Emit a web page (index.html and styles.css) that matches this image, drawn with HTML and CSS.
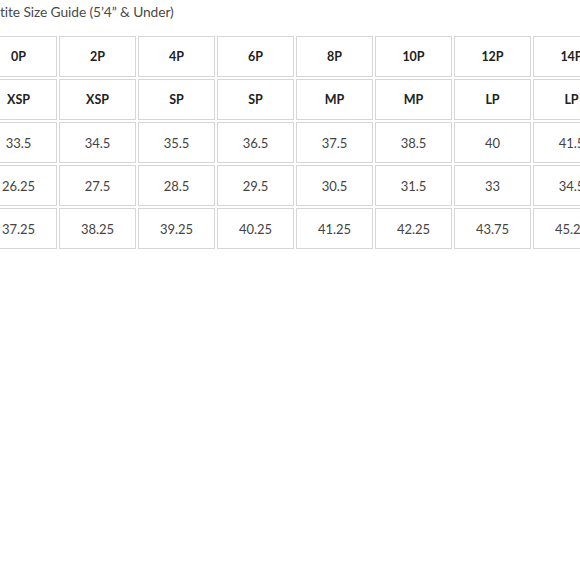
FILE: index.html
```html
<!DOCTYPE html>
<html>
<head>
<meta charset="utf-8">
<link rel="stylesheet" href="styles.css">
</head>
<body>
<div class="guide">
  <h2 class="title">Petite Size Guide (5’4” &amp; Under)</h2>
  <table class="sizes">
    <tr class="head">
      <td>0P</td><td>2P</td><td>4P</td><td>6P</td><td>8P</td><td>10P</td><td>12P</td><td>14P</td>
    </tr>
    <tr class="head">
      <td>XSP</td><td>XSP</td><td>SP</td><td>SP</td><td>MP</td><td>MP</td><td>LP</td><td>LP</td>
    </tr>
    <tr>
      <td>33.5</td><td>34.5</td><td>35.5</td><td>36.5</td><td>37.5</td><td>38.5</td><td>40</td><td>41.5</td>
    </tr>
    <tr>
      <td>26.25</td><td>27.5</td><td>28.5</td><td>29.5</td><td>30.5</td><td>31.5</td><td>33</td><td>34.5</td>
    </tr>
    <tr>
      <td>37.25</td><td>38.25</td><td>39.25</td><td>40.25</td><td>41.25</td><td>42.25</td><td>43.75</td><td>45.25</td>
    </tr>
  </table>
</div>
</body>
</html>
```
FILE: styles.css
```css
html, body {
  margin: 0;
  padding: 0;
  background: #fff;
  overflow: hidden;
}
.guide {
  margin-left: -22px;
  width: 700px;
  font-family: Lato, "Open Sans", sans-serif;
}
.title {
  margin: 0;
  padding: 3px 0 0 7px;
  height: 34px;
  box-sizing: border-box;
  font-size: 13.8px;
  font-weight: normal;
  color: #4a4a4a;
  line-height: 18px;
  letter-spacing: -0.1px;
}
.sizes {
  border-collapse: separate;
  border-spacing: 2px;
}
.sizes td {
  width: 75px;
  height: 39px;
  padding: 0;
  border: 1px solid #d6d6d6;
  text-align: center;
  vertical-align: middle;
  font-size: 13px;
  color: #444;
}
.head td {
  font-weight: bold;
  color: #222;
  font-size: 12.5px;
}
```
